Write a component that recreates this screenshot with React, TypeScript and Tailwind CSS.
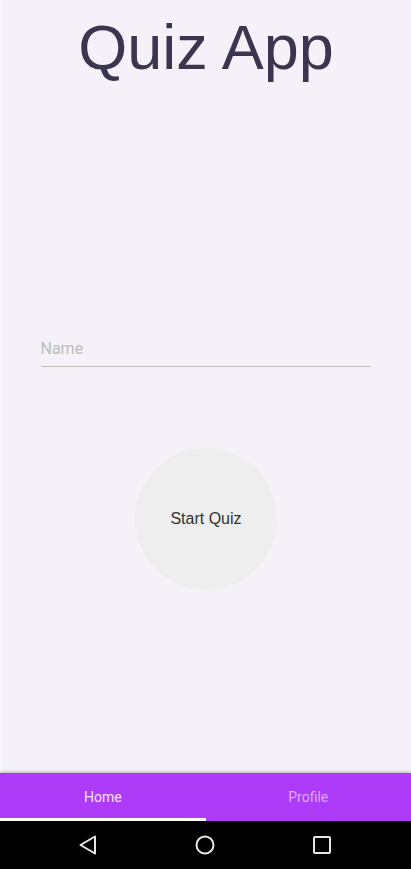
import React from "react";

export default function App() {
  return (
    <div className="flex h-[869px] w-[411px] flex-col overflow-hidden bg-[#f4f2f8]">
      <main className="flex flex-1 flex-col items-center border-l border-[#fbfafd]">
        <h1 className="mt-[10px] text-[63px] leading-[74px] text-[#3b3650] [font-family:'Liberation_Sans',Arial,sans-serif]">
          Quiz App
        </h1>

        <div className="mt-[252px] ml-[-1px] w-[330px] self-center border-b border-[#bdbdbd] pb-[6px]">
          <input
            placeholder="Name"
            className="w-full bg-transparent text-[16px] leading-[20px] text-[#333] outline-none placeholder:text-[#bdbdbd] [font-family:Roboto,sans-serif]"
          />
        </div>

        <button className="mt-[81px] flex h-[142px] w-[142px] items-center justify-center rounded-full bg-[#eeeeee] text-[16px] text-[#333] [font-family:'Liberation_Sans',Arial,sans-serif]">
          Start Quiz
        </button>
      </main>

      <nav className="flex h-[48px] shadow-[0_-1px_3px_rgba(0,0,0,0.25)] bg-[#ad3bf8] [font-family:Roboto,sans-serif] text-[14px]">
        <div className="flex flex-1 items-center justify-center border-b-[3px] border-white pt-[3px] text-[#f4e6fe]">
          Home
        </div>
        <div className="flex flex-1 items-center justify-center text-[#dcaafb]">
          Profile
        </div>
      </nav>

      <div className="flex h-[48px] items-center justify-between bg-black pl-[78px] pr-[79px]">
        <svg width="20" height="20" viewBox="0 0 20 20">
          <path d="M17 1.5 L2.5 10 L17 18.5 Z" fill="none" stroke="#e6e6e6" strokeWidth="2" strokeLinejoin="round" />
        </svg>
        <svg width="20" height="20" viewBox="0 0 20 20">
          <circle cx="10" cy="10" r="8.5" fill="none" stroke="#e6e6e6" strokeWidth="2" />
        </svg>
        <svg width="20" height="20" viewBox="0 0 20 20">
          <rect x="2" y="2" width="16" height="16" rx="1" fill="none" stroke="#e6e6e6" strokeWidth="2" />
        </svg>
      </div>
    </div>
  );
}
